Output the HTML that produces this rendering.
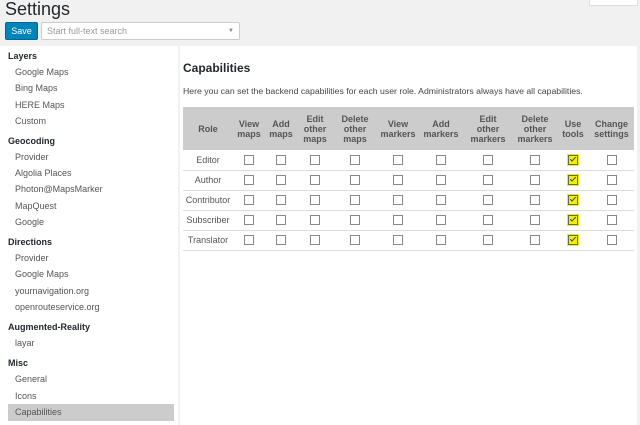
<!DOCTYPE html>
<html><head><style>
*{margin:0;padding:0;box-sizing:border-box}
body{width:640px;height:425px;background:#f1f1f1;font-family:"Liberation Sans",sans-serif;position:relative;overflow:hidden;color:#444}
.a{position:absolute;white-space:nowrap}
h1{position:absolute;left:5px;top:-1px;font-size:18px;font-weight:normal;color:#23282d}
.save{left:5px;top:22px;width:33px;height:18px;background:#0085ba;border:1px solid #006799;border-radius:2px;color:#fff;font-size:9px;line-height:16px;text-align:center}
.search{left:41px;top:22px;width:199px;height:18px;background:#fff;border:1px solid #ccc;border-radius:2px;color:#999;font-size:9px;line-height:16px;padding-left:5px}
.side{left:0;top:46px;width:178px;height:379px;background:#fff}
.main{left:180px;top:46px;width:457px;height:379px;background:#fff}
.h{font-size:9px;font-weight:bold;color:#23282d;left:8px}
.i{font-size:9px;color:#555;left:15px}
.sel{left:8px;top:404px;width:166px;height:17px;background:#ccc}
table{position:absolute;left:183px;top:107px;width:451px;border-collapse:collapse;font-size:9px}
th{background:#ccc;color:#555;font-weight:bold;height:43px;line-height:10px;padding:0 1px}
td{height:20px;text-align:center;border-bottom:1px solid #ddd;color:#555}
.cb{display:inline-block;width:10px;height:10px;border:1px solid #888;background:#fff;vertical-align:middle}
.y{display:inline-block;width:12px;height:12px;background:#f0f000;vertical-align:middle;padding:1px}
.y .cb{display:block;border-color:#666;background:#f0f000;position:relative}
.y .cb:after{content:"";position:absolute;left:1px;top:1px;width:5px;height:2px;border-left:1.3px solid #444;border-bottom:1.3px solid #444;transform:rotate(-45deg)}
</style></head><body>
<h1>Settings</h1>
<div class="a save">Save</div>
<div class="a search">Start full-text search<span style="position:absolute;right:5px;top:0;font-size:6px;color:#888">▼</span></div>
<div class="a" style="left:589px;top:0;width:49px;height:6px;background:#fff;border:1px solid #ddd;border-top:0"></div>
<div class="a side"></div>
<div class="a main"></div>
<div class="a sel"></div>
<div class="a h" style="top:51px">Layers</div>
<div class="a i" style="top:67px">Google Maps</div>
<div class="a i" style="top:83px">Bing Maps</div>
<div class="a i" style="top:100px">HERE Maps</div>
<div class="a i" style="top:116px">Custom</div>
<div class="a h" style="top:136px">Geocoding</div>
<div class="a i" style="top:152px">Provider</div>
<div class="a i" style="top:168px">Algolia Places</div>
<div class="a i" style="top:184px">Photon@MapsMarker</div>
<div class="a i" style="top:201px">MapQuest</div>
<div class="a i" style="top:217px">Google</div>
<div class="a h" style="top:237px">Directions</div>
<div class="a i" style="top:253px">Provider</div>
<div class="a i" style="top:269px">Google Maps</div>
<div class="a i" style="top:286px">yournavigation.org</div>
<div class="a i" style="top:302px">openrouteservice.org</div>
<div class="a h" style="top:322px">Augmented-Reality</div>
<div class="a i" style="top:338px">layar</div>
<div class="a h" style="top:358px">Misc</div>
<div class="a i" style="top:374px">General</div>
<div class="a i" style="top:391px">Icons</div>
<div class="a i" style="top:407px">Capabilities</div>
<div class="a" style="left:183px;top:61px;font-size:12px;font-weight:bold;color:#23282d">Capabilities</div>
<div class="a" style="left:183px;top:86px;font-size:8.7px;color:#444">Here you can set the backend capabilities for each user role. Administrators always have all capabilities.</div>
<table>
<tr><th style="width:50px">Role</th><th style="width:32px">View<br>maps</th><th style="width:32px">Add<br>maps</th><th style="width:36px">Edit<br>other<br>maps</th><th style="width:44px">Delete<br>other<br>maps</th><th style="width:42px">View<br>markers</th><th style="width:44px">Add<br>markers</th><th style="width:50px">Edit<br>other<br>markers</th><th style="width:44px">Delete<br>other<br>markers</th><th style="width:32px">Use<br>tools</th><th>Change<br>settings</th></tr>
<tr><td>Editor</td><td><i class="cb"></i></td><td><i class="cb"></i></td><td><i class="cb"></i></td><td><i class="cb"></i></td><td><i class="cb"></i></td><td><i class="cb"></i></td><td><i class="cb"></i></td><td><i class="cb"></i></td><td><span class="y"><i class="cb"></i></span></td><td><i class="cb"></i></td></tr>
<tr><td>Author</td><td><i class="cb"></i></td><td><i class="cb"></i></td><td><i class="cb"></i></td><td><i class="cb"></i></td><td><i class="cb"></i></td><td><i class="cb"></i></td><td><i class="cb"></i></td><td><i class="cb"></i></td><td><span class="y"><i class="cb"></i></span></td><td><i class="cb"></i></td></tr>
<tr><td>Contributor</td><td><i class="cb"></i></td><td><i class="cb"></i></td><td><i class="cb"></i></td><td><i class="cb"></i></td><td><i class="cb"></i></td><td><i class="cb"></i></td><td><i class="cb"></i></td><td><i class="cb"></i></td><td><span class="y"><i class="cb"></i></span></td><td><i class="cb"></i></td></tr>
<tr><td>Subscriber</td><td><i class="cb"></i></td><td><i class="cb"></i></td><td><i class="cb"></i></td><td><i class="cb"></i></td><td><i class="cb"></i></td><td><i class="cb"></i></td><td><i class="cb"></i></td><td><i class="cb"></i></td><td><span class="y"><i class="cb"></i></span></td><td><i class="cb"></i></td></tr>
<tr><td>Translator</td><td><i class="cb"></i></td><td><i class="cb"></i></td><td><i class="cb"></i></td><td><i class="cb"></i></td><td><i class="cb"></i></td><td><i class="cb"></i></td><td><i class="cb"></i></td><td><i class="cb"></i></td><td><span class="y"><i class="cb"></i></span></td><td><i class="cb"></i></td></tr>
</table>
</body></html>
